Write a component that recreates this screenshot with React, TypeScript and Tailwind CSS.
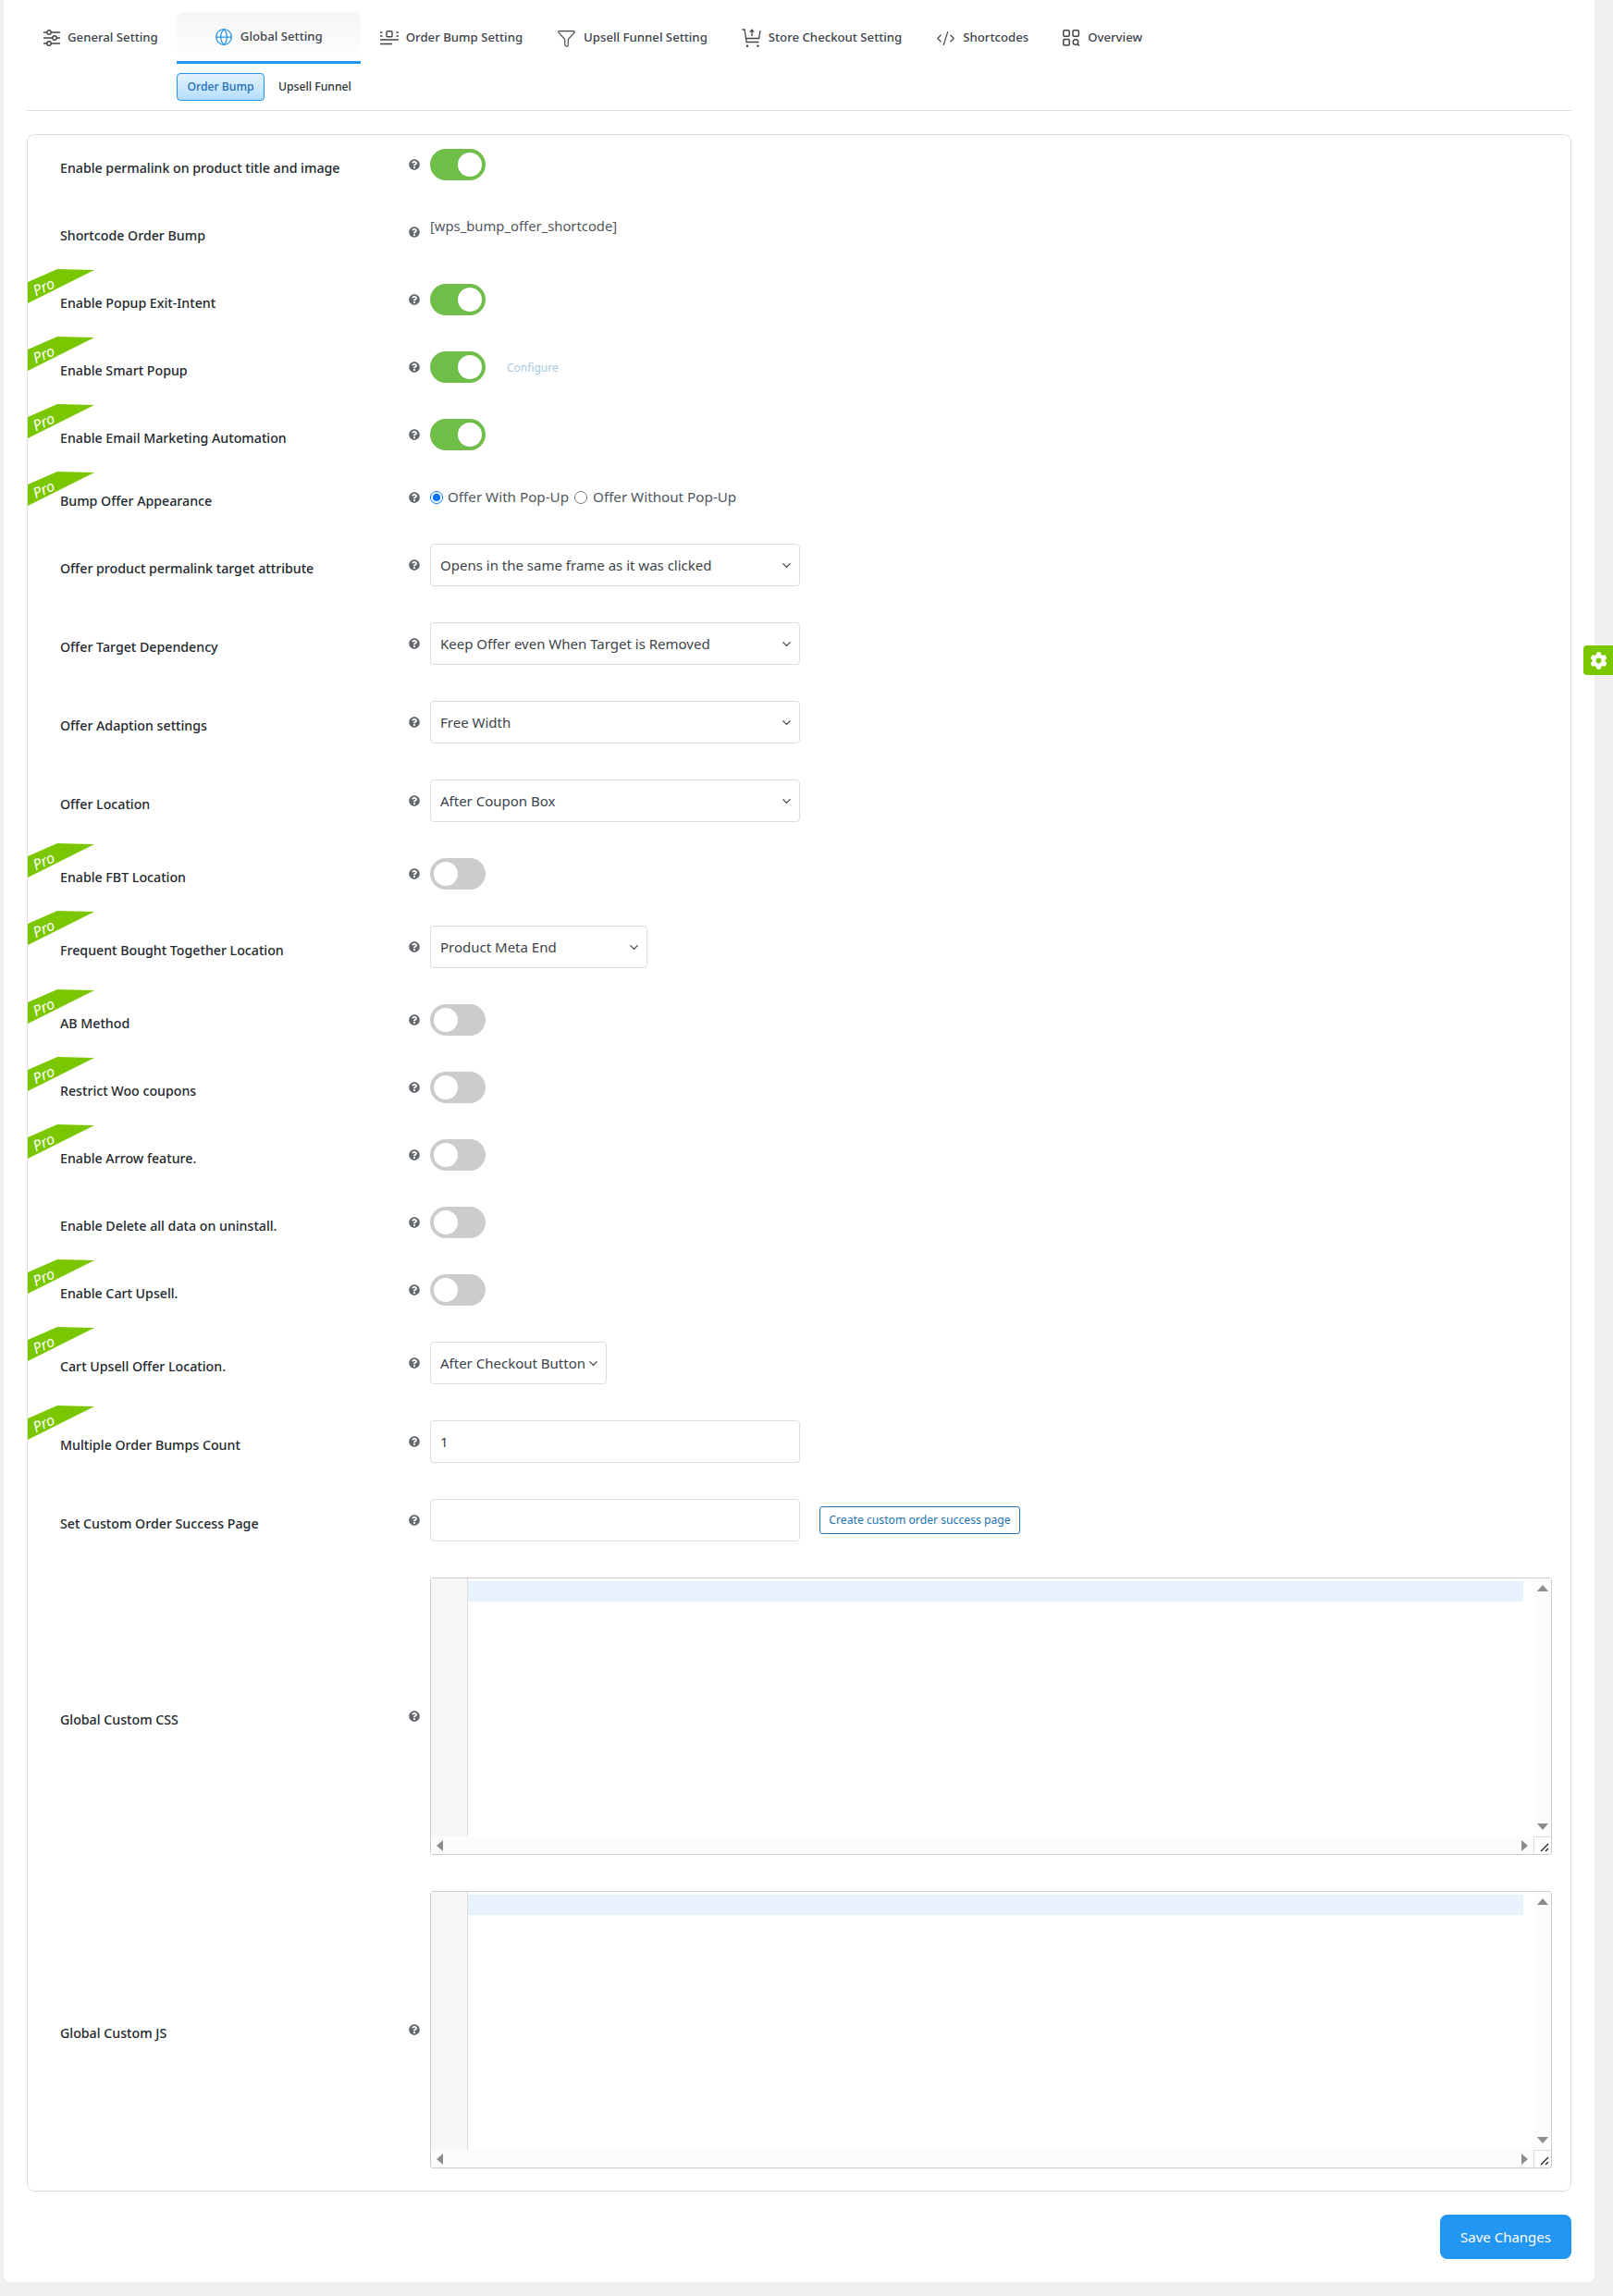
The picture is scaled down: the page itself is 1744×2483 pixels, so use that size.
import { ReactNode } from 'react';
import { ChevronDown, CodeXml, Funnel, Globe } from 'lucide-react';
import { FaCog, FaQuestionCircle } from 'react-icons/fa';

// nav icons that no package has in this shape
function SlidersIcon() {
  return (
    <svg width="18" height="18" viewBox="0 0 18 18" fill="none" stroke="#444" strokeWidth="1.4">
      <path d="M0 3h18M0 9h18M0 15h18" />
      <circle cx="6" cy="3" r="2.2" fill="#fff" />
      <circle cx="12" cy="9" r="2.2" fill="#fff" />
      <circle cx="6" cy="15" r="2.2" fill="#fff" />
    </svg>
  );
}

function BumpIcon() {
  return (
    <svg width="20" height="16" viewBox="0 0 20 16" fill="none" stroke="#444" strokeWidth="1.4">
      <rect x="7" y="0.8" width="6" height="6" rx="1" />
      <path d="M0 2h2.5M0 6h2.5M17.5 2H20M17.5 6H20M0 10h20M0 14.5h13" />
    </svg>
  );
}

function CartUpIcon() {
  return (
    <svg width="21" height="21" viewBox="0 0 21 21" fill="none" stroke="#444" strokeWidth="1.3">
      <path d="M0.5 1h2.6l2 13.5h13.4M4 10.5h14.6L20 2" />
      <path d="M11 8V1.5M8.8 3.6 11 1.2l2.2 2.4" />
      <circle cx="6" cy="18.8" r="1.2" fill="#444" stroke="none" />
      <circle cx="17.5" cy="18.8" r="1.2" fill="#444" stroke="none" />
    </svg>
  );
}

function OverviewIcon() {
  return (
    <svg width="19" height="18" viewBox="0 0 19 18" fill="none" stroke="#444" strokeWidth="1.5">
      <rect x="0.8" y="0.8" width="6.4" height="6.4" rx="1.2" />
      <rect x="11" y="0.8" width="6.4" height="6.4" rx="1.2" />
      <rect x="0.8" y="10.6" width="6.4" height="6.4" rx="1.2" />
      <circle cx="14" cy="13.6" r="2.8" />
      <path d="m16 15.6 2 2" />
    </svg>
  );
}

const tabs: { label: string; icon: ReactNode; active?: boolean }[] = [
  { label: 'General Setting', icon: <SlidersIcon /> },
  { label: 'Global Setting', icon: <Globe size={20} color="#2196f3" strokeWidth={1.5} />, active: true },
  { label: 'Order Bump Setting', icon: <BumpIcon /> },
  { label: 'Upsell Funnel Setting', icon: <Funnel size={21} color="#444" strokeWidth={1.3} /> },
  { label: 'Store Checkout Setting', icon: <CartUpIcon /> },
  { label: 'Shortcodes', icon: <CodeXml size={21} color="#444" strokeWidth={1.3} /> },
  { label: 'Overview', icon: <OverviewIcon /> },
];

function Toggle({ on }: { on?: boolean }) {
  return (
    <div className={`flex h-[34px] w-[60px] rounded-full p-1 ${on ? 'justify-end bg-[#6fbe49]' : 'bg-[#cccccc]'}`}>
      <div className="size-[26px] rounded-full bg-white" />
    </div>
  );
}

function Select({ value, width = 'w-[400px]' }: { value: string; width?: string }) {
  return (
    <div className={`flex h-[46px] items-center justify-between rounded border border-[#dddddd] pl-[10px] pr-[6px] text-[15px] text-[#3c434a] ${width}`}>
      <span className="whitespace-nowrap">{value}</span>
      <ChevronDown size={15} color="#3c434a" strokeWidth={2} className="shrink-0" />
    </div>
  );
}

function Radio({ checked }: { checked?: boolean }) {
  return (
    <span className={`flex size-[14px] items-center justify-center rounded-full border bg-white ${checked ? 'border-[#0075ff]' : 'border-[#767676]'}`}>
      {checked && <span className="size-[8px] rounded-full bg-[#0075ff]" />}
    </span>
  );
}

function Editor() {
  return (
    <div className="flex h-[300px] w-full flex-col rounded-[3px] border border-[#cccccc]">
      <div className="flex min-h-0 flex-1">
        <div className="w-[40px] border-r border-[#dddddd] bg-[#f7f7f7]" />
        <div className="flex-1 pr-[11px] pt-[3px]">
          <div className="h-[22px] bg-[#e8f2fe]" />
        </div>
        <div className="flex w-[19px] flex-col items-center justify-between bg-[#fcfcfc] py-[7px]">
          <div className="size-0 border-x-[6.5px] border-b-[7px] border-x-transparent border-b-[#8c8c8c]" />
          <div className="size-0 border-x-[6.5px] border-t-[7px] border-x-transparent border-t-[#8c8c8c]" />
        </div>
      </div>
      <div className="flex h-[19px]">
        <div className="flex flex-1 items-center justify-between bg-[#fcfcfc] pl-[6px] pr-[6px]">
          <div className="size-0 border-y-[6.5px] border-r-[7px] border-y-transparent border-r-[#8c8c8c]" />
          <div className="size-0 border-y-[6.5px] border-l-[7px] border-y-transparent border-l-[#8c8c8c]" />
        </div>
        <div className="flex w-[19px] items-end justify-end border-l border-t border-[#dddddd] p-[2px]">
          <svg width="10" height="10" viewBox="0 0 10 10" fill="none" stroke="#222" strokeWidth="1.3">
            <path d="M1 9 9 1M6 9l3-3" />
          </svg>
        </div>
      </div>
    </div>
  );
}

const onToggle = <Toggle on />;
const offToggle = <Toggle />;

const rows: { label: string; pro?: boolean; control: ReactNode }[] = [
  { label: 'Enable permalink on product title and image', control: onToggle },
  {
    label: 'Shortcode Order Bump',
    control: <div className="h-[34px] text-[14.8px] leading-[21px] text-[#50575e]">[wps_bump_offer_shortcode]</div>,
  },
  { label: 'Enable Popup Exit-Intent', pro: true, control: onToggle },
  {
    label: 'Enable Smart Popup',
    pro: true,
    control: (
      <div className="flex items-center gap-[23px]">
        {onToggle}
        <span className="mt-[2px] text-xs text-[#a9c9e2]">Configure</span>
      </div>
    ),
  },
  { label: 'Enable Email Marketing Automation', pro: true, control: onToggle },
  {
    label: 'Bump Offer Appearance',
    pro: true,
    control: (
      <div className="flex h-[23px] items-center text-[15.2px] text-[#50575e]">
        <Radio checked />
        <span className="ml-[5px]">Offer With Pop-Up</span>
        <span className="ml-[6px]"><Radio /></span>
        <span className="ml-[6px]">Offer Without Pop-Up</span>
      </div>
    ),
  },
  { label: 'Offer product permalink target attribute', control: <Select value="Opens in the same frame as it was clicked" /> },
  { label: 'Offer Target Dependency', control: <Select value="Keep Offer even When Target is Removed" /> },
  { label: 'Offer Adaption settings', control: <Select value="Free Width" /> },
  { label: 'Offer Location', control: <Select value="After Coupon Box" /> },
  { label: 'Enable FBT Location', pro: true, control: offToggle },
  { label: 'Frequent Bought Together Location', pro: true, control: <Select value="Product Meta End" width="w-[235px]" /> },
  { label: 'AB Method', pro: true, control: offToggle },
  { label: 'Restrict Woo coupons', pro: true, control: offToggle },
  { label: 'Enable Arrow feature.', pro: true, control: offToggle },
  { label: 'Enable Delete all data on uninstall.', control: offToggle },
  { label: 'Enable Cart Upsell.', pro: true, control: offToggle },
  { label: 'Cart Upsell Offer Location.', pro: true, control: <Select value="After Checkout Button" width="w-[191px]" /> },
  {
    label: 'Multiple Order Bumps Count',
    pro: true,
    control: (
      <div className="flex h-[46px] w-[400px] items-center rounded border border-[#dddddd] pl-[10px] text-[15px] text-[#3c434a]">1</div>
    ),
  },
  {
    label: 'Set Custom Order Success Page',
    control: (
      <div className="flex items-center gap-[21px]">
        <div className="h-[46px] w-[400px] rounded border border-[#dddddd]" />
        <button className="h-[30px] w-[217px] rounded-[3px] border border-[#2271b1] text-[12.2px] text-[#2271b1]">
          Create custom order success page
        </button>
      </div>
    ),
  },
  { label: 'Global Custom CSS', control: <Editor /> },
  { label: 'Global Custom JS', control: <Editor /> },
];

export default function App() {
  return (
    <div className="relative min-h-[2483px] bg-[#f0f0f0] pl-1 pb-[15px] font-['Noto_Sans',sans-serif] text-[14.2px]">
      <div className="w-[1720px] rounded-br-lg rounded-bl-lg bg-white px-[25px] pb-[25px] pt-[13px]">
        {/* top tabs */}
        <div className="flex gap-[1px] text-[13.2px] font-medium text-[#3c434a]">
          {tabs.map((tab) => (
            <div
              key={tab.label}
              className={`flex h-[56px] items-center justify-center gap-2 whitespace-nowrap px-[18px] ${
                tab.active ? 'ml-[1px] mr-[2px] w-[199px] rounded-t-lg border-b-[3px] border-[#2196f3] bg-gradient-to-b from-[#f5f5f5] to-white' : ''
              }`}
            >
              {tab.icon}
              {tab.label}
            </div>
          ))}
        </div>

        <div className="ml-[162px] mt-[10px] flex items-center gap-[15px] text-[12.2px] font-medium">
          <div className="flex h-[30px] w-[95px] items-center justify-center rounded border border-[#2196f3] bg-gradient-to-b from-[#e3f2fd] to-[#b3deff] text-[#1e6fb5]">
            Order Bump
          </div>
          <div className="text-[#2c3338]">Upsell Funnel</div>
        </div>

        <div className="mt-[10px] border-t border-[#dddddd]" />

        {/* settings card */}
        <div className="mt-[25px] rounded-lg border border-[#dddddd]">
          {rows.map((row) => (
            <div key={row.label} className="relative flex items-center">
              {row.pro && (
                <div className="absolute -top-px left-0 h-[37px] w-[72px] bg-[#7ac700] [clip-path:polygon(0_14px,32px_0,72px_1px,0_37px)]">
                  <span className="absolute left-[5px] top-[9px] -rotate-[25deg] text-[16px] italic leading-5 text-white">Pro</span>
                </div>
              )}
              <div className="w-[412px] shrink-0 pb-[1px] pl-[35px] font-medium text-[#23282d]">{row.label}</div>
              <div className="flex flex-1 items-center pb-[24px] pr-[20px] pt-[15px]">
                <FaQuestionCircle size={12} color="#646970" className="mr-[11px] shrink-0" />
                <div className="min-w-0 flex-1">{row.control}</div>
              </div>
            </div>
          ))}
        </div>

        <div className="mt-[25px] flex justify-end">
          <button className="h-[48px] w-[142px] rounded-lg bg-[#2196f3] text-[15px] text-white">Save Changes</button>
        </div>
      </div>

      {/* floating settings tab */}
      <div className="absolute right-0 top-[698px] flex h-[32px] w-[32px] items-center justify-center rounded-l bg-[#7ac700]">
        <FaCog size={19} color="#fff" />
      </div>
    </div>
  );
}
